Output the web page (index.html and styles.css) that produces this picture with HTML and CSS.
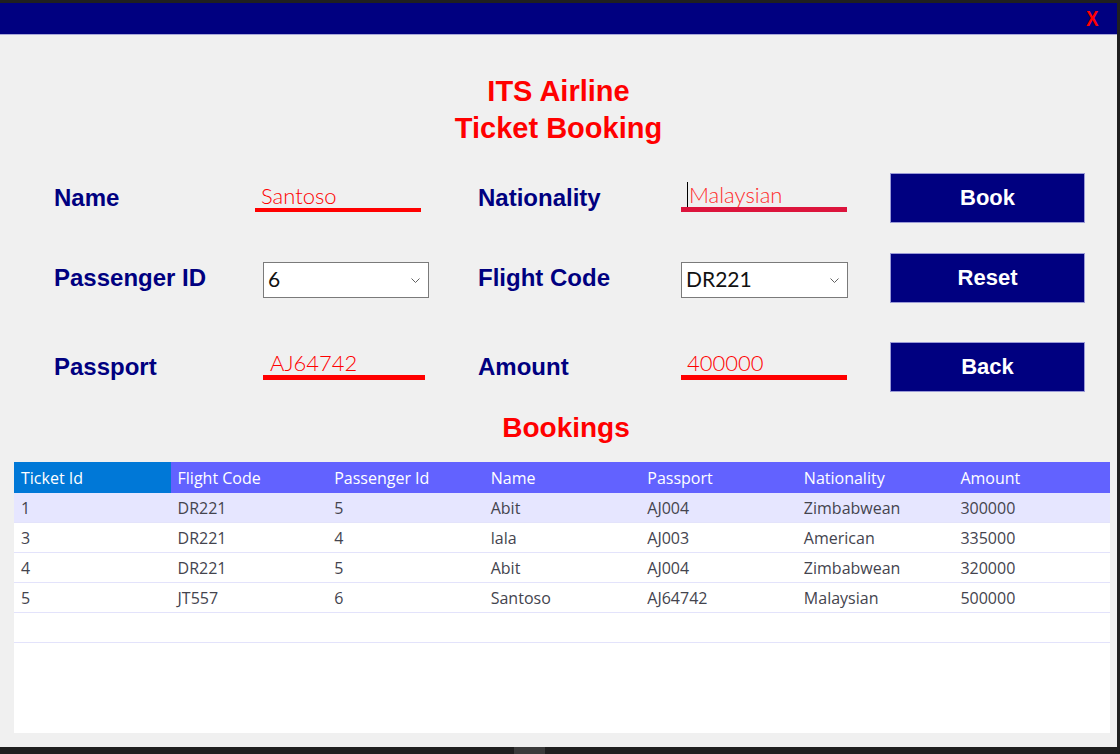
FILE: index.html
```html
<!DOCTYPE html>
<html lang="en">
<head>
<meta charset="utf-8">
<title>ITS Airline - Ticket Booking</title>
<link rel="stylesheet" href="styles.css">
</head>
<body>
<div class="window">
  <div class="titlebar"><span class="close">X</span></div>
  <div class="content">
    <h1 class="heading">ITS Airline<br>Ticket Booking</h1>

    <div class="form">
      <div class="row row-1">
        <div class="label">Name</div>
        <div class="cell"><div class="field">Santoso</div></div>
        <div class="label">Nationality</div>
        <div class="cell"><div class="field field-focus"><span class="caret"></span>Malaysian</div></div>
        <button class="btn">Book</button>
      </div>
      <div class="row row-2">
        <div class="label">Passenger ID</div>
        <div class="cell"><div class="combo combo-shift"><span>6</span><svg class="chev" width="9" height="5" viewBox="0 0 9 5"><path d="M0.5 0.5 L4.5 4.5 L8.5 0.5" fill="none" stroke="#606060" stroke-width="1"/></svg></div></div>
        <div class="label">Flight Code</div>
        <div class="cell"><div class="combo"><span>DR221</span><svg class="chev" width="9" height="5" viewBox="0 0 9 5"><path d="M0.5 0.5 L4.5 4.5 L8.5 0.5" fill="none" stroke="#606060" stroke-width="1"/></svg></div></div>
        <button class="btn">Reset</button>
      </div>
      <div class="row row-3">
        <div class="label">Passport</div>
        <div class="cell"><div class="field field-low field-shift">AJ64742</div></div>
        <div class="label">Amount</div>
        <div class="cell"><div class="field field-low">400000</div></div>
        <button class="btn">Back</button>
      </div>
    </div>

    <h2 class="subheading">Bookings</h2>

    <div class="table">
      <div class="trow thead">
        <div class="th th-active">Ticket Id</div>
        <div class="th">Flight Code</div>
        <div class="th">Passenger Id</div>
        <div class="th">Name</div>
        <div class="th">Passport</div>
        <div class="th">Nationality</div>
        <div class="th">Amount</div>
      </div>
      <div class="trow tr-selected">
        <div class="td">1</div><div class="td">DR221</div><div class="td">5</div><div class="td">Abit</div><div class="td">AJ004</div><div class="td">Zimbabwean</div><div class="td">300000</div>
      </div>
      <div class="trow">
        <div class="td">3</div><div class="td">DR221</div><div class="td">4</div><div class="td">lala</div><div class="td">AJ003</div><div class="td">American</div><div class="td">335000</div>
      </div>
      <div class="trow">
        <div class="td">4</div><div class="td">DR221</div><div class="td">5</div><div class="td">Abit</div><div class="td">AJ004</div><div class="td">Zimbabwean</div><div class="td">320000</div>
      </div>
      <div class="trow">
        <div class="td">5</div><div class="td">JT557</div><div class="td">6</div><div class="td">Santoso</div><div class="td">AJ64742</div><div class="td">Malaysian</div><div class="td">500000</div>
      </div>
      <div class="trow">
        <div class="td"></div><div class="td"></div><div class="td"></div><div class="td"></div><div class="td"></div><div class="td"></div><div class="td"></div>
      </div>
    </div>
  </div>
</div>
<div class="taskbar"><div class="tb-block"></div></div>
</body>
</html>
```

FILE: styles.css
```css
html, body {
  margin: 0;
  padding: 0;
}
body {
  background: #1f1f1f;
  width: 1120px;
  height: 754px;
  overflow: hidden;
  font-family: "Liberation Sans", Arial, sans-serif;
}
.window {
  width: 1117px;
  height: 744px;
  margin-top: 3px;
  background: #f0f0f0;
  display: flex;
  flex-direction: column;
}
.titlebar {
  height: 31px;
  background: #000080;
  border-bottom: 1px solid #a8a8d8;
  display: flex;
  justify-content: flex-end;
  align-items: center;
  padding-right: 17px;
}
.close {
  color: #ff0000;
  font: bold 22px/22px "Liberation Sans", Arial, sans-serif;
  transform: scaleX(0.85);
}
.content {
  display: flex;
  flex-direction: column;
}
.heading {
  margin: 38px 0 0 0;
  text-align: center;
  color: #ff0000;
  font: bold 29px/37px "Liberation Sans", Arial, sans-serif;
}
.form {
  margin-top: 26px;
  padding-left: 54px;
  display: flex;
  flex-direction: column;
}
.row {
  display: grid;
  grid-template-columns: 201px 223px 203px 209px 195px;
  height: 50px;
  align-items: center;
}
.row-1 { margin-bottom: 30px; }
.row-2 { margin-bottom: 39px; }
.label {
  color: #000080;
  font: bold 24px/30px "Liberation Sans", Arial, sans-serif;
  white-space: nowrap;
}
.cell {
  align-self: stretch;
}
.field {
  margin-top: 10px;
  width: 160px;
  height: 25px;
  padding-left: 6px;
  border-bottom: 4px solid #ff0000;
  color: #ff0000;
  font-family: Lato, "Open Sans", sans-serif;
  font-weight: 300;
  font-size: 22px;
  line-height: 25px;
  white-space: nowrap;
  display: flex;
  align-items: center;
}
.field-focus {
  border-bottom: 5px solid #dc143c;
  margin-top: 9px;
  color: #ff2a2a;
}
.field-low {
  margin-top: 8px;
  border-bottom-width: 5px;
}
.field-shift {
  margin-left: 8px;
  width: 155px;
  padding-left: 7px;
}
.caret {
  display: inline-block;
  width: 1px;
  height: 25px;
  background: #000;
  margin-right: 1px;
}
.combo {
  margin-top: 9px;
  width: 167px;
  height: 36px;
  box-sizing: border-box;
  background: #fff;
  border: 1px solid #7a7a7a;
  display: flex;
  align-items: center;
  justify-content: space-between;
  padding: 0 8px 3px 4px;
  font-family: Lato, "Open Sans", sans-serif;
  font-weight: 400;
  font-size: 21px;
  color: #111;
}
.combo-shift {
  margin-left: 8px;
  width: 166px;
}
.chev {
  display: block;
  margin-top: 3px;
}
.btn {
  align-self: stretch;
  background: #000080;
  border: 1px solid #9a9ad6;
  color: #ffffff;
  font: bold 22px/22px "Liberation Sans", Arial, sans-serif;
  padding: 0;
  margin: 0;
  cursor: pointer;
}
.subheading {
  margin: 19px 0 0 0;
  padding-left: 15px;
  text-align: center;
  color: #ff0000;
  font: bold 28px/34px "Liberation Sans", Arial, sans-serif;
}
.table {
  margin: 17px 0 0 14px;
  width: 1096px;
  height: 271px;
  background: #ffffff;
  display: flex;
  flex-direction: column;
}
.trow {
  display: grid;
  grid-template-columns: repeat(7, 1fr);
  height: 30px;
  box-sizing: border-box;
  border-bottom: 1px solid #e3e3fb;
  font-family: "Open Sans", "Noto Sans", sans-serif;
  font-size: 16px;
  color: #44444e;
}
.thead {
  height: 31px;
  border-bottom: none;
  background: #6262ff;
  color: #ffffff;
}
.th, .td {
  display: flex;
  align-items: center;
  padding-left: 7px;
  white-space: nowrap;
}
.th-active {
  background: #0078d7;
}
.tr-selected {
  background: #e6e6ff;
}
.taskbar {
  height: 7px;
  display: flex;
}
.tb-block {
  margin-left: 514px;
  width: 31px;
  height: 7px;
  background: #3a3a3a;
}
```
